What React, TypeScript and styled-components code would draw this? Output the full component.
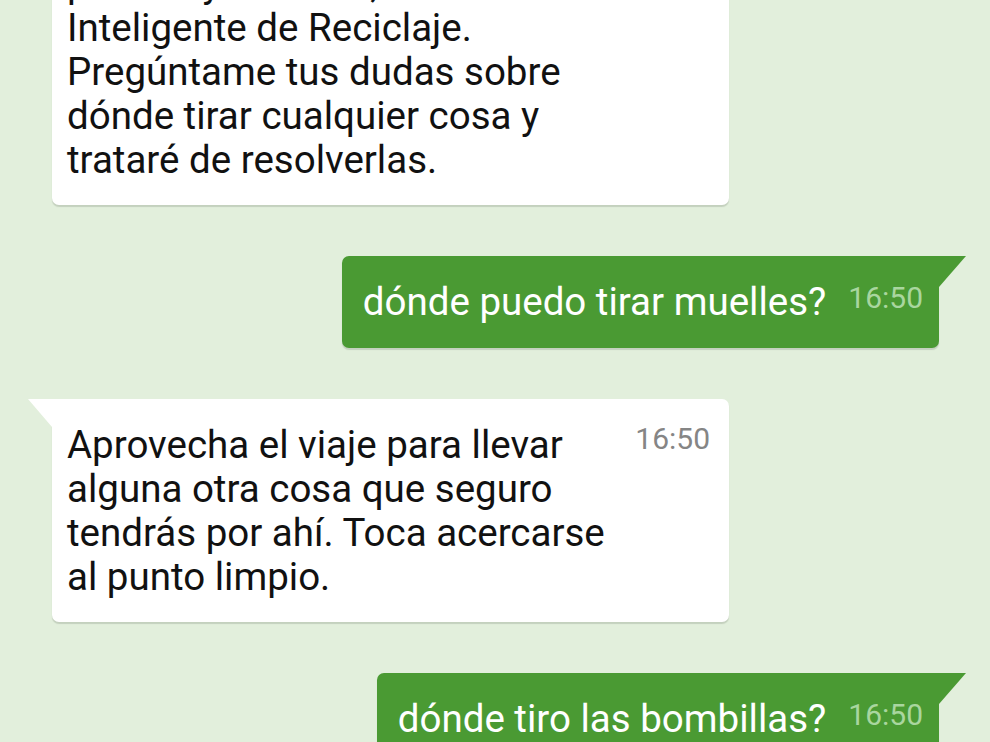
import { useLayoutEffect, useRef } from "react";
import styled, { createGlobalStyle } from "styled-components";

type Message = {
  id: number;
  from: "bot" | "me";
  text: React.ReactNode;
  time: string;
};

const messages: Message[] = [
  {
    id: 1,
    from: "bot",
    text: (
      <>
        ¡Hola! Soy Reci,
        <br />
        pues hoy también, el Asistente Inteligente de Reciclaje. Pregúntame
        tus dudas sobre dónde tirar cualquier cosa y trataré de resolverlas.
      </>
    ),
    time: "16:49",
  },
  { id: 2, from: "me", text: "dónde puedo tirar muelles?", time: "16:50" },
  {
    id: 3,
    from: "bot",
    text: "Aprovecha el viaje para llevar alguna otra cosa que seguro tendrás por ahí. Toca acercarse al punto limpio.",
    time: "16:50",
  },
  { id: 4, from: "me", text: "dónde tiro las bombillas?", time: "16:50" },
];

// how far the conversation is scrolled down
const SCROLL_OFFSET = 106;

const App = () => {
  const viewportRef = useRef<HTMLDivElement>(null);

  useLayoutEffect(() => {
    if (viewportRef.current) viewportRef.current.scrollTop = SCROLL_OFFSET;
  }, []);

  return (
    <>
      <GlobalStyle />
      <Viewport ref={viewportRef}>
        <Thread>
          {messages.map((m) =>
            m.from === "bot" ? (
              <Received key={m.id}>
                <Text>{m.text}</Text>
                <Time>{m.time}</Time>
              </Received>
            ) : (
              <Sent key={m.id}>
                <Text $mine>{m.text}</Text>
                <Time $mine>{m.time}</Time>
              </Sent>
            )
          )}
        </Thread>
      </Viewport>
    </>
  );
};

export default App;

// Styled Components
const GlobalStyle = createGlobalStyle`
  *, *::before, *::after {
    box-sizing: border-box;
  }
  html, body {
    margin: 0;
    padding: 0;
    background: #e2efdc;
  }
  body {
    font-family: Roboto, "Noto Sans", Arial, sans-serif;
  }
`;

const Viewport = styled.div`
  height: 742px;
  overflow: hidden;
  background: #e2efdc;
`;

const Thread = styled.div`
  display: flex;
  flex-direction: column;
  gap: 51px;
  padding: 0 24px 60px 28px;
`;

const Bubble = styled.div`
  position: relative;
  display: flex;
  align-items: flex-start;
  padding-top: 24px;
  box-shadow: 0 2px 1px rgba(60, 70, 55, 0.18);
`;

const Received = styled(Bubble)`
  align-self: flex-start;
  width: 677px;
  gap: 18px;
  margin-left: 24px;
  padding-left: 15px;
  padding-right: 19px;
  padding-bottom: 23px;
  background: #ffffff;
  border-radius: 0 7px 7px 7px;

  &::before {
    content: "";
    position: absolute;
    top: 0;
    left: -24px;
    width: 24px;
    height: 28px;
    background: #ffffff;
    clip-path: polygon(0 0, 100% 0, 100% 100%);
  }
`;

const Sent = styled(Bubble)`
  align-self: flex-end;
  gap: 22px;
  margin-right: 27px;
  padding-left: 21px;
  padding-right: 16px;
  padding-bottom: 24px;
  background: #4a9a33;
  border-radius: 7px 0 7px 7px;

  &::after {
    content: "";
    position: absolute;
    top: 0;
    right: -27px;
    width: 27px;
    height: 31px;
    background: #4a9a33;
    clip-path: polygon(0 0, 100% 0, 0 100%);
  }
`;

const Text = styled.div<{ $mine?: boolean }>`
  flex: 1 1 auto;
  min-width: 0;
  font-size: 38.5px;
  line-height: 44px;
  color: ${(p) => (p.$mine ? "#ffffff" : "#111111")};
`;

const Time = styled.span<{ $mine?: boolean }>`
  flex: none;
  margin-top: ${(p) => (p.$mine ? "2px" : "0")};
  font-size: 30px;
  line-height: 31px;
  color: ${(p) => (p.$mine ? "#a9d69f" : "#858585")};
`;
